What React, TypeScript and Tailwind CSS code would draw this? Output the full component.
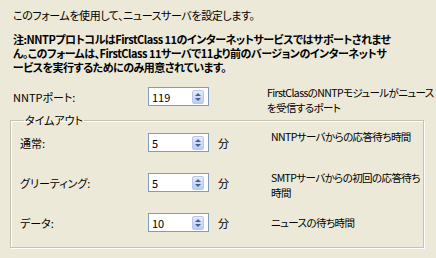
import React from 'react';

interface SpinProps {
  value: string;
}

const SpinBox: React.FC<SpinProps> = ({ value }) => (
  <div className="w-[61px] h-[19px] shrink-0 bg-white border border-[#7F9DB9] flex items-center">
    <span className="flex-1 pl-[3px] leading-[14px]">{value}</span>
    <div className="w-[12px] h-[14px] mr-[4px] rounded-[2px] border border-[#B7C9F1] bg-gradient-to-b from-[#E3ECFE] to-[#B9CCF7] flex flex-col items-center justify-center gap-[2px]">
      <svg width="6" height="3" viewBox="0 0 6 3">
        <path d="M0 3 L3 0 L6 3 Z" fill="#4D6185" />
      </svg>
      <svg width="6" height="3" viewBox="0 0 6 3">
        <path d="M0 0 L6 0 L3 3 Z" fill="#4D6185" />
      </svg>
    </div>
  </div>
);

interface TimeoutRow {
  label: string;
  value: string;
  help: React.ReactNode;
  helpShift: string;
}

const rows: TimeoutRow[] = [
  { label: '通常:', value: '5', help: 'NNTPサーバからの応答待ち時間', helpShift: '-mt-[4px]' },
  {
    label: 'グリーティング:',
    value: '5',
    help: (
      <>
        SMTPサーバからの初回の応答待ち
        <br />
        時間
      </>
    ),
    helpShift: '-mt-[3px]',
  },
  { label: 'データ:', value: '10', help: 'ニュースの待ち時間', helpShift: 'mt-[2px]' },
];

const App: React.FC = () => {
  return (
    <div className="w-[436px] h-[258px] overflow-hidden bg-[#ECE9D8] text-black text-[11px] leading-[14px] pl-[13px] pt-[8px] font-['Noto_Sans_CJK_JP',sans-serif] [font-feature-settings:'palt']">
      <p className="whitespace-nowrap tracking-[-0.4px]">このフォームを使用して、ニュースサーバを設定します。</p>

      <p className="mt-[10px] font-bold whitespace-nowrap tracking-[-0.5px]">
        注:NNTPプロトコルはFirstClass 11のインターネットサービスではサポートされませ
        <br />
        ん。このフォームは、FirstClass 11サーバで11より前のバージョンのインターネットサ
        <br />
        ービスを実行するためにのみ用意されています。
      </p>

      <div className="mt-[13px] flex items-start">
        <div className="w-[135px] shrink-0 h-[19px] flex items-center">NNTPポート:</div>
        <SpinBox value="119" />
        <div className="ml-[58px] -mt-[2px] text-[10.5px] tracking-[-0.6px] leading-[15px] whitespace-nowrap">
          FirstClassのNNTPモジュールがニュース
          <br />
          を受信するポート
        </div>
      </div>

      <fieldset className="min-w-0 -ml-[3px] -mt-[2px] w-[414px] border border-[#C5C2B2] shadow-[inset_1px_1px_0_#fff,1px_1px_0_#fff] pl-[9px] pb-[15px]">
        <legend className="ml-[4px] px-[1px] leading-[14px]">タイムアウト</legend>
        <div className="mt-[6px] flex flex-col gap-[21px]">
          {rows.map((row) => (
            <div key={row.label} className="h-[19px] flex items-center">
              <div className="w-[128px] shrink-0">{row.label}</div>
              <SpinBox value={row.value} />
              <div className="ml-[9px] shrink-0">分</div>
              <div
                className={`ml-[42px] self-start text-[10.5px] tracking-[-0.6px] leading-[15px] whitespace-nowrap ${row.helpShift}`}
              >
                {row.help}
              </div>
            </div>
          ))}
        </div>
      </fieldset>
    </div>
  );
};

export default App;
